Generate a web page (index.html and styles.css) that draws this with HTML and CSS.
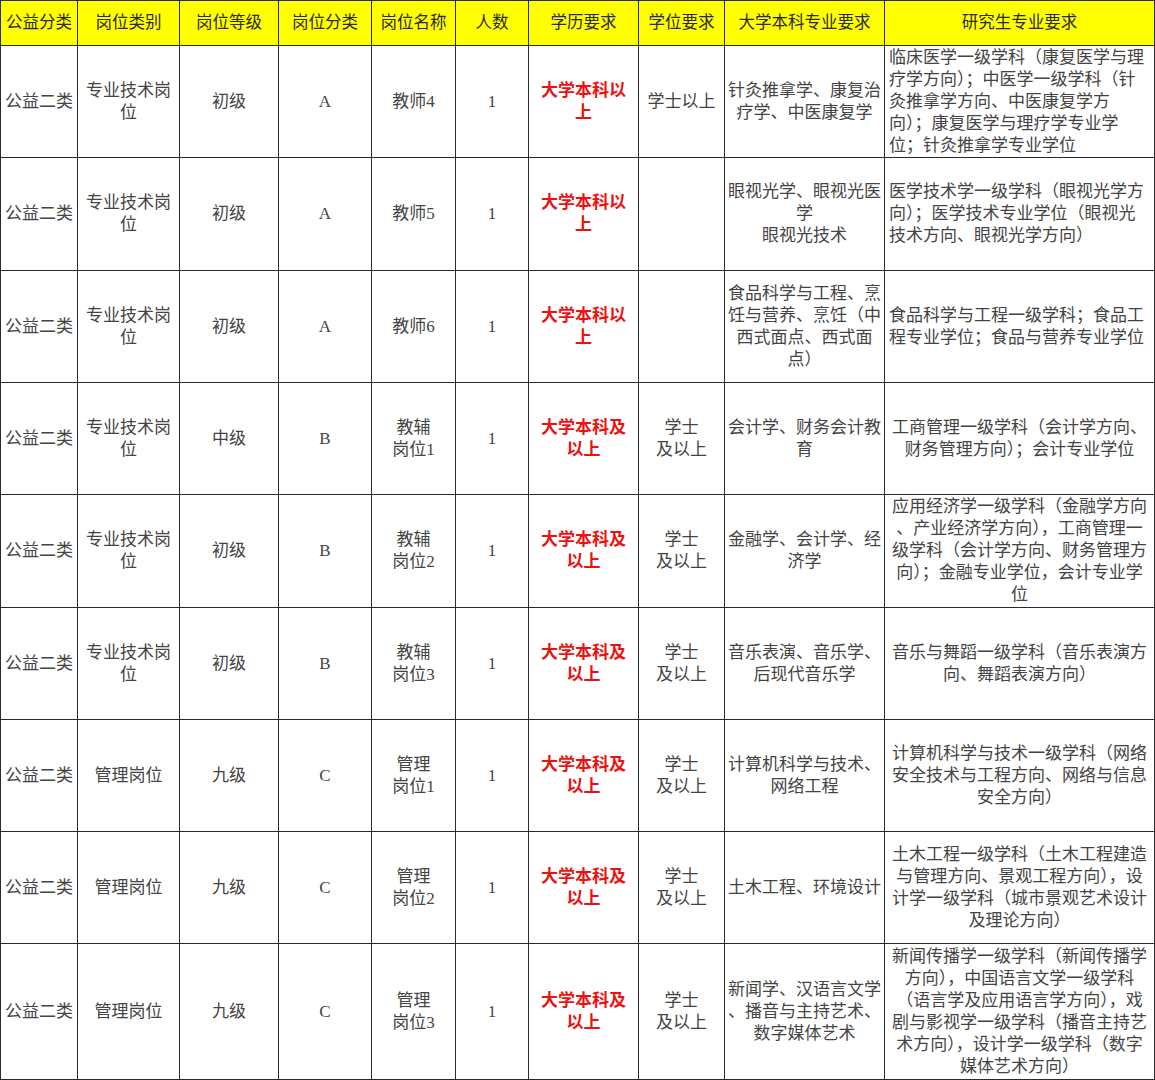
FILE: index.html
```html
<!DOCTYPE html>
<html lang="zh-CN">
<head>
<meta charset="utf-8">
<title>岗位表</title>
<link rel="stylesheet" href="styles.css">
</head>
<body>
<table class="jobs">
  <colgroup>
    <col class="c1"><col class="c2"><col class="c3"><col class="c4"><col class="c5">
    <col class="c6"><col class="c7"><col class="c8"><col class="c9"><col class="c10">
  </colgroup>
  <thead>
    <tr class="head">
      <th>公益分类</th><th>岗位类别</th><th>岗位等级</th><th>岗位分类</th><th>岗位名称</th>
      <th>人数</th><th>学历要求</th><th>学位要求</th><th>大学本科专业要求</th><th>研究生专业要求</th>
    </tr>
  </thead>
  <tbody>
    <tr class="r112">
      <td>公益二类</td><td>专业技术岗<br>位</td><td>初级</td><td>A</td><td>教师4</td><td>1</td>
      <td class="red">大学本科以<br>上</td><td>学士以上</td>
      <td>针灸推拿学、康复治<br>疗学、中医康复学</td>
      <td class="left">临床医学一级学科（康复医学与理<br>疗学方向）；中医学一级学科（针<br>灸推拿学方向、中医康复学方<br>向）；康复医学与理疗学专业学<br>位；针灸推拿学专业学位</td>
    </tr>
    <tr class="r113">
      <td>公益二类</td><td>专业技术岗<br>位</td><td>初级</td><td>A</td><td>教师5</td><td>1</td>
      <td class="red">大学本科以<br>上</td><td></td>
      <td>眼视光学、眼视光医<br>学<br>眼视光技术</td>
      <td class="left">医学技术学一级学科（眼视光学方<br>向）；医学技术专业学位（眼视光<br>技术方向、眼视光学方向）</td>
    </tr>
    <tr class="r112">
      <td>公益二类</td><td>专业技术岗<br>位</td><td>初级</td><td>A</td><td>教师6</td><td>1</td>
      <td class="red">大学本科以<br>上</td><td></td>
      <td>食品科学与工程、烹<br>饪与营养、烹饪（中<br>西式面点、西式面<br>点）</td>
      <td class="left">食品科学与工程一级学科；食品工<br>程专业学位；食品与营养专业学位</td>
    </tr>
    <tr class="r112">
      <td>公益二类</td><td>专业技术岗<br>位</td><td>中级</td><td>B</td><td>教辅<br>岗位1</td><td>1</td>
      <td class="red">大学本科及<br>以上</td><td>学士<br>及以上</td>
      <td>会计学、财务会计教<br>育</td>
      <td>工商管理一级学科（会计学方向、<br>财务管理方向）；会计专业学位</td>
    </tr>
    <tr class="r113">
      <td>公益二类</td><td>专业技术岗<br>位</td><td>初级</td><td>B</td><td>教辅<br>岗位2</td><td>1</td>
      <td class="red">大学本科及<br>以上</td><td>学士<br>及以上</td>
      <td>金融学、会计学、经<br>济学</td>
      <td>应用经济学一级学科（金融学方向<br>、产业经济学方向），工商管理一<br>级学科（会计学方向、财务管理方<br>向）；金融专业学位，会计专业学<br>位</td>
    </tr>
    <tr class="r112">
      <td>公益二类</td><td>专业技术岗<br>位</td><td>初级</td><td>B</td><td>教辅<br>岗位3</td><td>1</td>
      <td class="red">大学本科及<br>以上</td><td>学士<br>及以上</td>
      <td>音乐表演、音乐学、<br>后现代音乐学</td>
      <td>音乐与舞蹈一级学科（音乐表演方<br>向、舞蹈表演方向）</td>
    </tr>
    <tr class="r112">
      <td>公益二类</td><td>管理岗位</td><td>九级</td><td>C</td><td>管理<br>岗位1</td><td>1</td>
      <td class="red">大学本科及<br>以上</td><td>学士<br>及以上</td>
      <td>计算机科学与技术、<br>网络工程</td>
      <td>计算机科学与技术一级学科（网络<br>安全技术与工程方向、网络与信息<br>安全方向）</td>
    </tr>
    <tr class="r112">
      <td>公益二类</td><td>管理岗位</td><td>九级</td><td>C</td><td>管理<br>岗位2</td><td>1</td>
      <td class="red">大学本科及<br>以上</td><td>学士<br>及以上</td>
      <td>土木工程、环境设计</td>
      <td>土木工程一级学科（土木工程建造<br>与管理方向、景观工程方向），设<br>计学一级学科（城市景观艺术设计<br>及理论方向）</td>
    </tr>
    <tr class="r136">
      <td>公益二类</td><td>管理岗位</td><td>九级</td><td>C</td><td>管理<br>岗位3</td><td>1</td>
      <td class="red">大学本科及<br>以上</td><td>学士<br>及以上</td>
      <td>新闻学、汉语言文学<br>、播音与主持艺术、<br>数字媒体艺术</td>
      <td>新闻传播学一级学科（新闻传播学<br>方向），中国语言文学一级学科<br>（语言学及应用语言学方向），戏<br>剧与影视学一级学科（播音主持艺<br>术方向），设计学一级学科（数字<br>媒体艺术方向）</td>
    </tr>
  </tbody>
</table>
</body>
</html>
```
FILE: styles.css
```css
html {
  background: #f3f3f3;
}
body {
  margin: 0;
  font-family: "Liberation Serif", "Noto Sans CJK SC", serif;
  color: #444444;
}
.jobs {
  border-collapse: collapse;
  table-layout: fixed;
  width: 1154px;
  background: #ffffff;
}
.c1 { width: 77px; }
.c2 { width: 102px; }
.c3 { width: 99px; }
.c4 { width: 93px; }
.c5 { width: 84px; }
.c6 { width: 73px; }
.c7 { width: 110px; }
.c8 { width: 86px; }
.c9 { width: 160px; }
.c10 { width: 270px; }

.jobs th,
.jobs td {
  border: 1px solid #2a2a2a;
  padding: 0 1px;
  text-align: center;
  vertical-align: middle;
  font-size: 17px;
  line-height: 22px;
  white-space: nowrap;
  overflow: hidden;
}
.jobs th {
  background: #ffff00;
  font-weight: normal;
  color: #2a2a2a;
  font-size: 16.5px;
}
.head { height: 45px; }
.r112 { height: 112px; }
.r113 { height: 113px; }
.r136 { height: 136px; }

.jobs td.red {
  color: #ee1111;
  font-weight: bold;
}
.jobs td.left {
  text-align: left;
  padding-left: 4px;
}
```
